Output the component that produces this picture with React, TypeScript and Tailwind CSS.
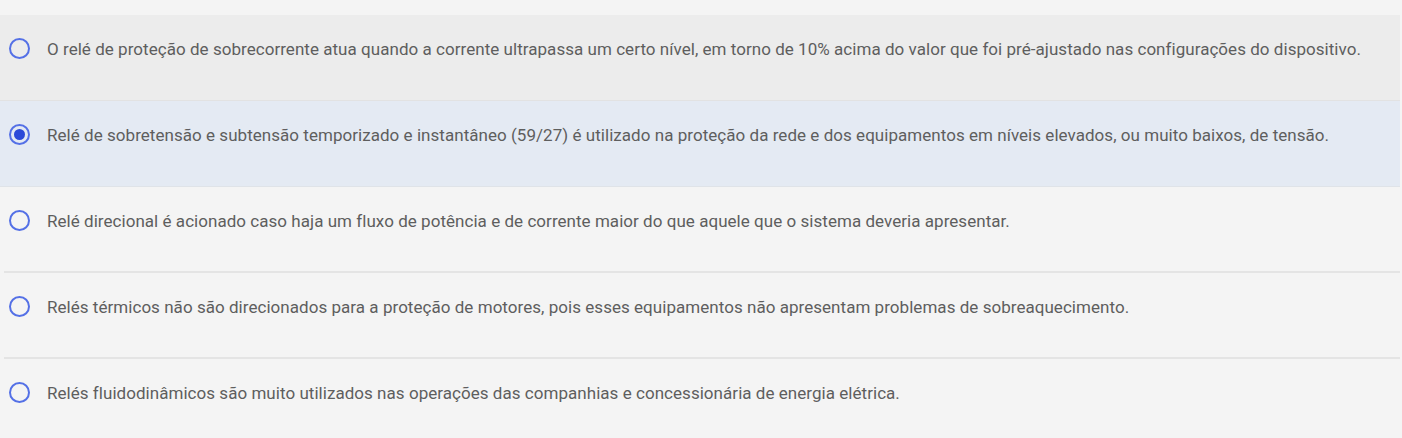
import React from 'react';

const OPTIONS = [
  'O relé de proteção de sobrecorrente atua quando a corrente ultrapassa um certo nível, em torno de 10% acima do valor que foi pré-ajustado nas configurações do dispositivo.',
  'Relé de sobretensão e subtensão temporizado e instantâneo (59/27) é utilizado na proteção da rede e dos equipamentos em níveis elevados, ou muito baixos, de tensão.',
  'Relé direcional é acionado caso haja um fluxo de potência e de corrente maior do que aquele que o sistema deveria apresentar.',
  'Relés térmicos não são direcionados para a proteção de motores, pois esses equipamentos não apresentam problemas de sobreaquecimento.',
  'Relés fluidodinâmicos são muito utilizados nas operações das companhias e concessionária de energia elétrica.',
];

const Radio: React.FC<{ checked: boolean }> = ({ checked }) => (
  <span className="flex h-[21px] w-[21px] shrink-0 items-center justify-center rounded-full border-2 border-[#5470e6]">
    {checked && <span className="h-[11px] w-[11px] rounded-full bg-[#2c4ad8]" />}
  </span>
);

export default function App() {
  const selected = 1;
  const hovered = 0;

  const rowClass = (i: number) => {
    if (i === selected) return 'bg-[#e4eaf3] border-b border-[#dfe3e8] pl-[9px]';
    if (i === hovered) return 'bg-[#ececec] border-b border-[#e2e2e2] pl-[9px]';
    if (i === OPTIONS.length - 1) return 'pl-[9px]';
    return 'ml-[4px] pl-[5px] border-b-2 border-[#e4e4e4]';
  };

  return (
    <div className="min-h-[438px] bg-[#f4f4f4] pt-[15px] pr-[2px] font-['Roboto',sans-serif]">
      {OPTIONS.map((text, i) => (
        <div key={i} className={`flex h-[86px] items-start gap-[17px] pt-[23px] ${rowClass(i)}`}>
          <Radio checked={i === selected} />
          <span className="text-[17px] leading-[23px] tracking-[0.04px] text-[#5e5e5e]">{text}</span>
        </div>
      ))}
    </div>
  );
}
